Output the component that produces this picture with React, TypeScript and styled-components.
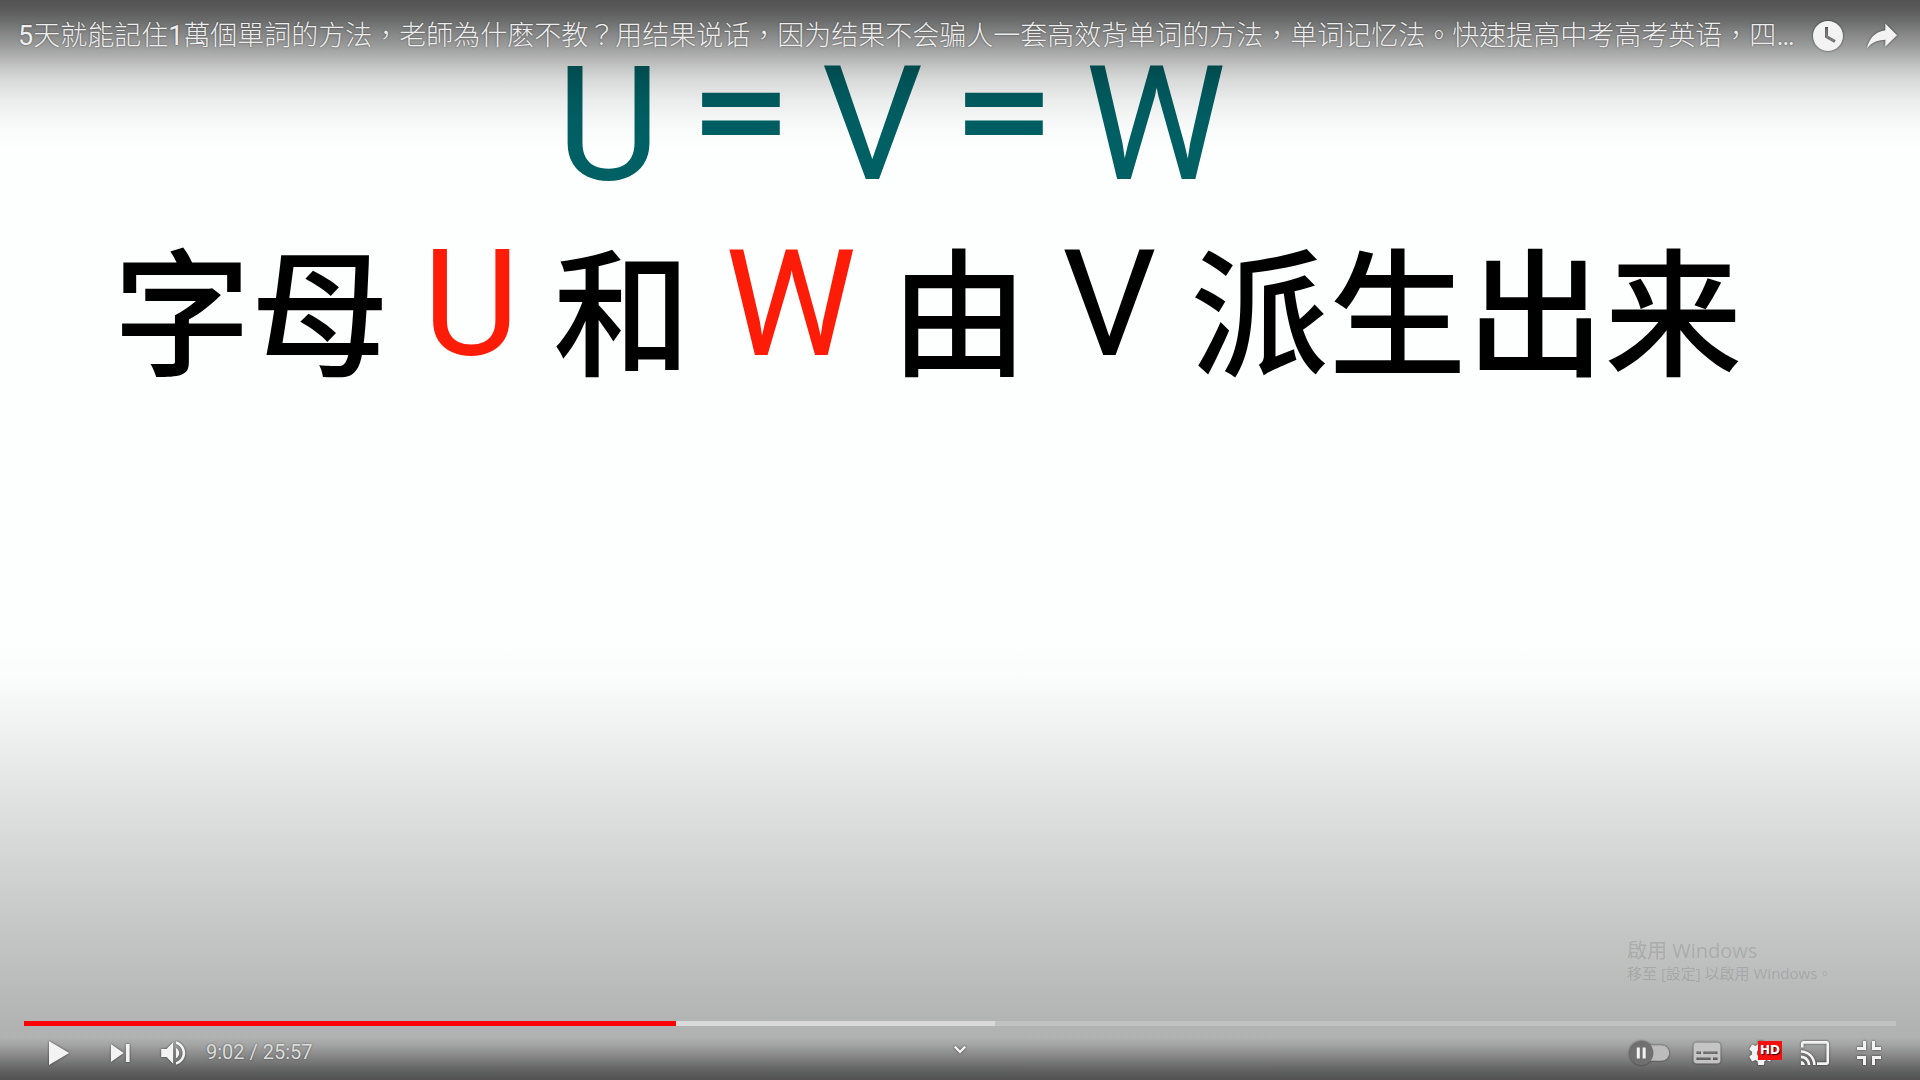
import React from "react";
import styled, { createGlobalStyle } from "styled-components";

const GlobalStyle = createGlobalStyle`
  *, *::before, *::after { box-sizing: border-box; }
  body { margin: 0; background: #fdfffe; }
`;

const Player = styled.main`
  position: relative;
  display: flex;
  flex-direction: column;
  min-height: 100vh;
  overflow: hidden;
  background: #fdfffe;
  font-family: Roboto, "Noto Sans CJK TC", sans-serif;
`;

/* Dark scrims laid over the video so the controls stay readable. */
const Scrim = styled.div<{ $edge: "top" | "bottom" }>`
  position: absolute;
  left: 0;
  right: 0;
  pointer-events: none;
  ${({ $edge }) =>
    $edge === "top"
      ? `
    top: 0;
    height: 150px;
    background: linear-gradient(to bottom,
      rgba(0,0,0,.68) 0, rgba(0,0,0,.64) 10px, rgba(0,0,0,.58) 20px,
      rgba(0,0,0,.48) 33px, rgba(0,0,0,.36) 50px, rgba(0,0,0,.28) 60px,
      rgba(0,0,0,.22) 68px, rgba(0,0,0,.145) 80px, rgba(0,0,0,.075) 100px,
      rgba(0,0,0,.035) 117px, rgba(0,0,0,.012) 133px, rgba(0,0,0,0) 150px);`
      : `
    bottom: 0;
    height: 440px;
    background:
      linear-gradient(to top, rgba(0,0,0,.54) 0, rgba(0,0,0,.44) 10px,
        rgba(0,0,0,.24) 24px, rgba(0,0,0,.08) 35px, rgba(0,0,0,0) 43px),
      linear-gradient(to top, rgba(0,0,0,.31) 0, rgba(0,0,0,.3) 50px,
        rgba(0,0,0,.27) 90px, rgba(0,0,0,.215) 160px, rgba(0,0,0,.155) 230px,
        rgba(0,0,0,.105) 290px, rgba(0,0,0,.06) 345px,
        rgba(0,0,0,.01) 400px, rgba(0,0,0,0) 440px);`}
`;

const TopBar = styled.header`
  position: relative;
  z-index: 1;
  display: flex;
  align-items: flex-start;
  height: 65px;
  padding: 9px 11px 0 18px;
`;

const Title = styled.h1`
  flex: 1;
  min-width: 0;
  margin: 0;
  overflow: hidden;
  white-space: nowrap;
  font-size: 27px;
  font-weight: 300;
  line-height: 54px;
`;

const TitleLink = styled.a`
  color: #eee;
  text-decoration: none;
  text-shadow: 0 0 2px rgba(0, 0, 0, 0.5);
`;

const Digit = styled.span`
  font-weight: 400;
`;

const IconButton = styled.button<{ $pad?: number }>`
  position: relative;
  display: flex;
  flex: none;
  align-items: center;
  justify-content: center;
  height: 54px;
  margin: 0;
  padding: 0 ${({ $pad = 0 }) => $pad}px;
  border: 0;
  background: none;
  color: #f3f3f3;
  cursor: pointer;
`;

const Glyph = styled.svg`
  display: block;
  width: 54px;
  height: 54px;
  fill: currentColor;
  filter: drop-shadow(0 0 1px rgba(0, 0, 0, 0.6));
`;

const Slide = styled.section`
  flex: 1;
`;

const Formula = styled.p`
  display: flex;
  gap: 29px;
  margin: 0;
  padding-left: 29%;
  color: #006064;
  font-size: 159px;
  line-height: 120px;
`;

const Equals = styled.span`
  font-family: "DejaVu Sans", sans-serif;
  font-size: 124px;
  font-weight: 700;
  line-height: 90px;
`;

const Sentence = styled.p`
  display: flex;
  gap: 34px;
  margin: 50px 0 0;
  padding-left: 113px;
  color: #000;
  font-family: "Noto Sans CJK SC", sans-serif;
  font-size: 138px;
  font-weight: 500;
  line-height: 140px;
  white-space: nowrap;
`;

const Letter = styled.span<{ $color?: string }>`
  color: ${({ $color = "#000" }) => $color};
  font-family: Roboto, sans-serif;
  font-size: 148px;
  font-weight: 400;
`;

const Activation = styled.aside`
  align-self: flex-end;
  width: 293px;
  margin-bottom: 38px;
  color: rgba(70, 74, 72, 0.18);
  font-family: "Open Sans", "Noto Sans CJK TC", sans-serif;
`;

const ActivationTitle = styled.p`
  margin: 0;
  font-size: 20px;
  line-height: 24px;
`;

const ActivationHint = styled.p`
  margin: 0;
  font-size: 15px;
  line-height: 20px;
`;

const Bottom = styled.footer`
  position: relative;
  z-index: 1;
  padding: 0 24px;
`;

const Track = styled.div`
  height: 5px;
  background: linear-gradient(
    to right,
    #f00 0 34.83%,
    rgba(255, 255, 255, 0.5) 34.83% 51.87%,
    rgba(255, 255, 255, 0.2) 51.87%
  );
`;

const Controls = styled.div`
  display: grid;
  grid-template-columns: 1fr auto 1fr;
  height: 54px;
`;

const Group = styled.div<{ $end?: boolean }>`
  display: flex;
  align-items: center;
  justify-content: ${({ $end }) => ($end ? "flex-end" : "flex-start")};
`;

const Time = styled.span`
  color: #ddd;
  font-size: 20px;
  line-height: 52px;
  height: 54px;
  text-shadow: 0 0 2px rgba(0, 0, 0, 0.5);
  white-space: nowrap;
`;

const Badge = styled.span`
  position: absolute;
  top: 15px;
  left: 24px;
  width: 24px;
  height: 19px;
  background: #f51010;
  color: #fff;
  font: bold 12px/19px "DejaVu Sans", sans-serif;
  text-align: center;
  text-shadow: 1px 1px 1px rgba(0, 0, 0, 0.8);
`;

function Icon({ children }: { children: React.ReactNode }) {
  return (
    <Glyph viewBox="0 0 36 36" aria-hidden="true">
      {children}
    </Glyph>
  );
}

export default function App() {
  return (
    <Player>
      <GlobalStyle />
      <TopBar>
        <Title>
          <TitleLink href="#video">
            <Digit>5</Digit>天就能記住<Digit>1</Digit>
            萬個單詞的方法，老師為什麽不教？用结果说话，因为结果不会骗人一套高效背单词的方法，单词记忆法。快速提高中考高考英语，四<Digit>…</Digit>
          </TitleLink>
        </Title>
        <IconButton aria-label="稍後觀看">
          <Icon>
            <path
              fillRule="evenodd"
              d="M18,8 C12.47,8 8,12.47 8,18 C8,23.52 12.47,28 18,28 C23.52,28 28,23.52 28,18 C28,12.47 23.52,8 18,8 Z M16,19.02 L16,12 L18,12 L18,17.86 L23.1,20.81 L22.1,22.54 L16,19.02 Z"
            />
          </Icon>
        </IconButton>
        <IconButton aria-label="分享">
          <Icon>
            <path d="m 20.20,14.19 0,-4.45 7.79,7.79 -7.79,7.56 0,-4.56 C 16.27,20.69 12.10,21.81 9.34,24.76 8.80,25.13 7.60,27.29 8.12,25.65 9.08,21.32 11.80,17.18 15.98,15.38 c 1.33,-0.60 2.76,-0.98 4.21,-1.19 z" />
          </Icon>
        </IconButton>
      </TopBar>

      <Slide>
        <Formula>
          <span>U</span>
          <Equals>=</Equals>
          <span>V</span>
          <Equals>=</Equals>
          <span>W</span>
        </Formula>
        <Sentence lang="zh-Hans">
          <span>字母</span>
          <Letter $color="#fc1c08">U</Letter>
          <span>和</span>
          <Letter $color="#fc1c08">W</Letter>
          <span>由</span>
          <Letter>V</Letter>
          <span>派生出来</span>
        </Sentence>
      </Slide>

      <Scrim $edge="top" />
      <Scrim $edge="bottom" />

      <Activation>
        <ActivationTitle>啟用 Windows</ActivationTitle>
        <ActivationHint>移至 [設定] 以啟用 Windows。</ActivationHint>
      </Activation>

      <Bottom>
        <Track role="progressbar" aria-label="播放進度" aria-valuenow={542} aria-valuemin={0} aria-valuemax={1557} />
        <Controls>
          <Group>
            <IconButton $pad={7} aria-label="播放">
              <Icon>
                <path d="M12,10 L25.5,18 L12,26 Z" />
              </Icon>
            </IconButton>
            <IconButton aria-label="下一部">
              <Icon>
                <path d="M12,24 L20.5,18 L12,12 Z M22,12 V24 H24.5 V12 Z" transform="translate(.6 0)" />
              </Icon>
            </IconButton>
            <IconButton $pad={3} aria-label="靜音">
              <Icon>
                <path d="M8,21 L12,21 L17,26 L17,10 L12,15 L8,15 L8,21 Z M19,14 L19,22 C20.48,21.32 21.5,19.77 21.5,18 C21.5,16.26 20.48,14.74 19,14 Z M19,11.29 C21.89,12.15 24,14.83 24,18 C24,21.17 21.89,23.85 19,24.71 L19,26.77 C23.01,25.86 26,22.28 26,18 C26,13.72 23.01,10.14 19,9.23 L19,11.29 Z" transform="translate(1 2) scale(.89)" />
              </Icon>
            </IconButton>
            <Time>9:02 / 25:57</Time>
          </Group>

          <IconButton aria-label="更多影片">
            <Icon>
              <path d="M15.1,13.2 L18,16.1 L20.9,13.2 L22,14.3 L18,18.3 L14,14.3 Z" />
            </Icon>
          </IconButton>

          <Group $end>
            <IconButton aria-label="自動播放">
              <Icon>
                <rect x="9" y="13" width="21" height="10.4" rx="5.2" fill="#bcbcbc" transform="translate(-1.2 -.2)" />
                <circle cx="10.3" cy="18" r="8" fill="#707070" />
                <path d="M7.2,14.4 h2 v7.2 h-2 z M11.1,14.4 h2 v7.2 h-2 z" fill="#f3f3f3" />
              </Icon>
            </IconButton>
            <IconButton aria-label="字幕">
              <Icon>
                <path
                  fill="#c4c4c4"
                  fillRule="evenodd"
                  d="M11,11 C9.9,11 9,11.9 9,13 V23 C9,24.1 9.9,25 11,25 H25 C26.1,25 27,24.1 27,23 V13 C27,11.9 26.1,11 25,11 Z M11,17 H14 V18.6 H11 Z M15.6,17 H25 V18.6 H15.6 Z M11,21 H20.4 V22.6 H11 Z M22,21 H25 V22.6 H22 Z"
                />
              </Icon>
            </IconButton>
            <IconButton aria-label="設定">
              <Icon>
                <path
                  fillRule="evenodd"
                  d="m 23.94,18.78 c .03,-0.25 .05,-0.51 .05,-0.78 0,-0.27 -0.02,-0.52 -0.05,-0.78 l 1.68,-1.32 c .15,-0.12 .19,-0.33 .09,-0.51 l -1.6,-2.76 c -0.09,-0.17 -0.31,-0.24 -0.48,-0.17 l -1.99,.8 c -0.41,-0.32 -0.86,-0.58 -1.35,-0.78 l -0.30,-2.12 c -0.02,-0.19 -0.19,-0.33 -0.39,-0.33 l -3.2,0 c -0.2,0 -0.36,.14 -0.39,.33 l -0.30,2.12 c -0.48,.2 -0.93,.47 -1.35,.78 l -1.99,-0.8 c -0.18,-0.07 -0.39,0 -0.48,.17 l -1.6,2.76 c -0.10,.17 -0.05,.39 .09,.51 l 1.68,1.32 c -0.03,.25 -0.05,.52 -0.05,.78 0,.26 .02,.52 .05,.78 l -1.68,1.32 c -0.15,.12 -0.19,.33 -0.09,.51 l 1.6,2.76 c .09,.17 .31,.24 .48,.17 l 1.99,-0.8 c .41,.32 .86,.58 1.35,.78 l .30,2.12 c .02,.19 .19,.33 .39,.33 l 3.2,0 c .2,0 .36,-0.14 .39,-0.33 l .30,-2.12 c .48,-0.2 .93,-0.47 1.35,-0.78 l 1.99,.8 c .18,.07 .39,0 .48,-0.17 l 1.6,-2.76 c .09,-0.17 .05,-0.39 -0.09,-0.51 l -1.68,-1.32 z m -5.94,2.01 c -1.54,0 -2.8,-1.25 -2.8,-2.8 0,-1.54 1.25,-2.8 2.8,-2.8 1.54,0 2.8,1.25 2.8,2.8 0,1.54 -1.25,2.8 -2.8,2.8 z"
                />
              </Icon>
              <Badge>HD</Badge>
            </IconButton>
            <IconButton aria-label="投放">
              <Icon>
                <path d="M25.6,10 H10.4 C9.4,10 8.6,10.8 8.6,11.8 V14.4 H10.4 V11.8 H25.6 V24.2 H19.3 V26 H25.6 C26.6,26 27.4,25.2 27.4,24.2 V11.8 C27.4,10.8 26.6,10 25.6,10 Z M8.6,23.3 V26 H11.3 C11.3,24.5 10.1,23.3 8.6,23.3 Z M8.6,19.7 V21.5 C11.1,21.5 13.1,23.5 13.1,26 H14.9 C14.9,22.5 12.1,19.7 8.6,19.7 Z M8.6,16.1 V17.9 C13.1,17.9 16.7,21.5 16.7,26 H18.5 C18.5,20.5 14.1,16.1 8.6,16.1 Z" />
              </Icon>
            </IconButton>
            <IconButton aria-label="結束全螢幕">
              <Icon>
                <path d="M14,14 H10 V16 H16 V10 H14 Z M22,14 V10 H20 V16 H26 V14 Z M20,26 H22 V22 H26 V20 H20 Z M10,22 H14 V26 H16 V20 H10 Z" />
              </Icon>
            </IconButton>
          </Group>
        </Controls>
      </Bottom>
    </Player>
  );
}
